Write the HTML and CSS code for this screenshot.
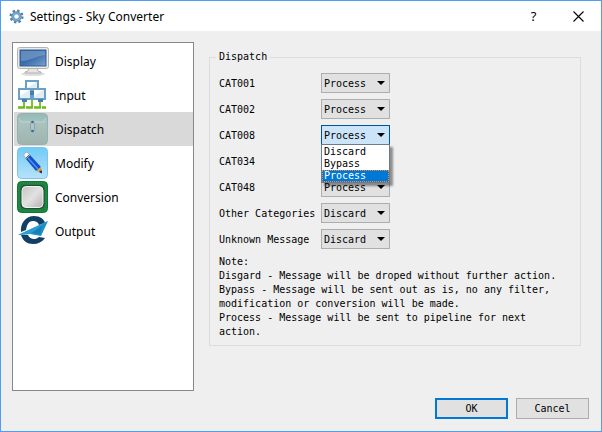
FILE: index.html
```html
<!DOCTYPE html>
<html lang="en">
<head>
    <meta charset="UTF-8">
    <meta name="viewport" content="width=device-width, initial-scale=1.0">
    <title>Settings - Sky Converter</title>
    <link rel="stylesheet" href="styles.css">
</head>
<body>

<div class="window">
    <header class="titlebar">
        <svg class="app-icon" viewBox="0 0 16 16">
            <circle cx="8" cy="8" r="6" fill="none" stroke="#4f83ac" stroke-width="3" stroke-dasharray="2.4 2.31"/>
            <circle cx="8" cy="8" r="4" fill="#fff" stroke="#5f92ba" stroke-width="3"/>
            <circle cx="8" cy="8" r="4" fill="none" stroke="#8db4d2" stroke-width="1"/>
        </svg>
        <h1>Settings - Sky Converter</h1>
        <button type="button" class="caption-btn" aria-label="Help">?</button>
        <button type="button" class="caption-btn" aria-label="Close">
            <svg width="11" height="11" viewBox="0 0 11 11">
                <path d="M.5 .5l10 10M10.5 .5l-10 10" stroke="#000" stroke-width="1.1"/>
            </svg>
        </button>
    </header>

    <main class="content">
        <nav class="pages">
            <a href="#display">
                <svg viewBox="0 0 32 32">
                    <defs>
                        <linearGradient id="screen" x1="0" y1="0" x2="1" y2="1">
                            <stop offset="0" stop-color="#3466a5"/>
                            <stop offset=".5" stop-color="#3b6fac"/>
                            <stop offset="1" stop-color="#7ba3cf"/>
                        </linearGradient>
                    </defs>
                    <ellipse cx="16" cy="29" rx="12" ry="2" fill="#dededc"/>
                    <path d="M12 23h8l1 3 3 1v1H8v-1l3-1z" fill="#e6e6e2" stroke="#a5a6a2" stroke-width=".8"/>
                    <rect x=".5" y="2.5" width="31" height="21" rx="2" fill="#ecece8" stroke="#b4b4af"/>
                    <rect x="3" y="5" width="26" height="16" fill="url(#screen)" stroke="#2f5e9a"/>
                    <path d="M4 6h24v4C19 11 13 16 4 16z" fill="#fff" opacity=".22"/>
                </svg>
                Display
            </a>
            <a href="#input">
                <svg viewBox="0 0 32 32">
                    <path d="M7 23v5M15 20v8M23 23v5" stroke="#7cc42c" stroke-width="2"/>
                    <path d="M1 28.500h28" stroke="#6cba16" stroke-width="2.500" stroke-dasharray="7 1"/>
                    <g fill="#e2eef6" stroke="#6ba0c6" stroke-width="2">
                        <rect x="9" y="2" width="12" height="10"/>
                        <rect x="2" y="10" width="12" height="10"/>
                        <rect x="16" y="10" width="12" height="10"/>
                    </g>
                    <path d="M5 20h5v3H5zM21 20h5v3h-5zM13 12h4v4h-4z" fill="#4680aa"/>
                    <path d="M3 11h9l-9 6zM17 11h9l-9 6zM10 3h9l-9 6z" fill="#fff"/>
                </svg>
                Input
            </a>
            <a href="#dispatch" class="selected">
                <svg viewBox="0 0 32 32">
                    <defs>
                        <linearGradient id="folder" x1="0" y1="0" x2="0" y2="1">
                            <stop offset="0" stop-color="#93b9b6"/>
                            <stop offset=".3" stop-color="#a9c3bf"/>
                            <stop offset="1" stop-color="#9fb3ac"/>
                        </linearGradient>
                    </defs>
                    <rect x=".5" y=".5" width="30" height="31" rx="4" fill="url(#folder)" stroke="#94b2ae"/>
                    <path d="M2 5l2 4h23l2-4" fill="none" stroke="#bfd4d0"/>
                    <rect x="13.500" y="9" width="4" height="9" rx="1.500" fill="#b4c4c9" stroke="#8199a2" stroke-width=".8"/>
                    <circle cx="15.500" cy="9" r="1.300" fill="#2670a8"/>
                    <circle cx="15.500" cy="18" r="1.300" fill="#2670a8"/>
                </svg>
                Dispatch
            </a>
            <a href="#modify">
                <svg viewBox="0 0 32 32">
                    <defs>
                        <linearGradient id="sky" x1="0" y1="0" x2="0" y2="1">
                            <stop offset="0" stop-color="#6dccf7"/>
                            <stop offset=".4" stop-color="#8ed4f8"/>
                            <stop offset="1" stop-color="#b6e3fb"/>
                        </linearGradient>
                    </defs>
                    <rect x=".5" y=".5" width="30" height="31" rx="4" fill="url(#sky)" stroke="#7cc4e8"/>
                    <path d="M9 12l4-4 11 12-5 4z" fill="#1450c8"/>
                    <path d="M11 11l10 11" stroke="#4c96f5" stroke-width="1.500"/>
                    <path d="M7 9q-1-3 3-4l3 3-4 4z" fill="#f7f7f7" stroke="#8a95a0" stroke-width=".6"/>
                    <path d="M8.500 11.500l4-4" stroke="#5d6976" stroke-width="1"/>
                    <path d="M19 24l5-4 1 6z" fill="#dd9c4d"/>
                    <path d="M22 25l2.500-2 .5 3.500z" fill="#222"/>
                </svg>
                Modify
            </a>
            <a href="#conversion">
                <svg viewBox="0 0 32 32">
                    <defs>
                        <linearGradient id="chip" x1="0" y1="0" x2="1" y2="1">
                            <stop offset="0" stop-color="#c4c4c4"/>
                            <stop offset=".5" stop-color="#e2e2e2"/>
                            <stop offset="1" stop-color="#b2b2b2"/>
                        </linearGradient>
                    </defs>
                    <rect x=".5" y=".5" width="30" height="31" rx="4" fill="#16823b" stroke="#0d7a33"/>
                    <rect x="2" y="2" width="27" height="28" rx="4" fill="none" stroke="#349a53" stroke-dasharray="1 1"/>
                    <rect x="3.500" y="4" width="24" height="24" rx="5" fill="#31443a"/>
                    <rect x="5" y="5.500" width="21" height="21" rx="4" fill="url(#chip)" stroke="#f2f2f2"/>
                </svg>
                Conversion
            </a>
            <a href="#output">
                <svg viewBox="0 0 32 32">
                    <path d="M4 17C3 8 9 1 17 1c6 0 10 3 11 7l-6 2c-1-3-3-4-6-4-4 0-6 3-7 9z" fill="#123f66"/>
                    <path d="M4 20c2 6 6 9 12 9 5 0 9-2 12-6l-6-1c-3 3-9 3-11-2z" fill="#123f66"/>
                    <path d="M31 6L1 20l12-1 11 2z" fill="#1f8fc6"/>
                    <path d="M31 6L13 19l-12 1z" fill="#2c9dd1"/>
                    <path d="M25 11L15 18l8 1z" fill="#1680b8"/>
                </svg>
                Output
            </a>
        </nav>

        <form class="settings" id="settingsForm">
            <fieldset>
                <legend>Dispatch</legend>

                <div class="row">
                    <label for="cat001">CAT001</label>
                    <div class="combo">
                        <select id="cat001"><option>Discard</option><option>Bypass</option><option selected>Process</option></select>
                    </div>
                </div>
                <div class="row">
                    <label for="cat002">CAT002</label>
                    <div class="combo">
                        <select id="cat002"><option>Discard</option><option>Bypass</option><option selected>Process</option></select>
                    </div>
                </div>
                <div class="row">
                    <label for="cat008">CAT008</label>
                    <div class="combo open">
                        <select id="cat008"><option>Discard</option><option>Bypass</option><option selected>Process</option></select>
                        <ul class="dropdown">
                            <li>Discard</li>
                            <li>Bypass</li>
                            <li class="active">Process</li>
                        </ul>
                    </div>
                </div>
                <div class="row">
                    <label for="cat034">CAT034</label>
                    <div class="combo">
                        <select id="cat034"><option>Discard</option><option>Bypass</option><option selected>Process</option></select>
                    </div>
                </div>
                <div class="row">
                    <label for="cat048">CAT048</label>
                    <div class="combo">
                        <select id="cat048"><option>Discard</option><option>Bypass</option><option selected>Process</option></select>
                    </div>
                </div>
                <div class="row">
                    <label for="other">Other Categories</label>
                    <div class="combo">
                        <select id="other"><option selected>Discard</option><option>Bypass</option><option>Process</option></select>
                    </div>
                </div>
                <div class="row">
                    <label for="unknown">Unknown Message</label>
                    <div class="combo">
                        <select id="unknown"><option selected>Discard</option><option>Bypass</option><option>Process</option></select>
                    </div>
                </div>

                <div class="note">
                    <p>Note:</p>
                    <p>Disgard - Message will be droped without further action.</p>
                    <p>Bypass - Message will be sent out as is, no any filter, modification or conversion will be made.</p>
                    <p>Process - Message will be sent to pipeline for next action.</p>
                </div>
            </fieldset>
        </form>
    </main>

    <footer class="actions">
        <button type="submit" form="settingsForm" class="btn default">OK</button>
        <button type="button" class="btn">Cancel</button>
    </footer>
</div>

</body>
</html>
```
FILE: styles.css
```css
* {
    box-sizing: border-box;
}

body {
    margin: 0;
    font-family: "DejaVu Sans Mono", monospace;
    font-size: 10px;
    color: #000;
}

.window {
    display: flex;
    flex-direction: column;
    min-height: 100vh;
    border: 1px solid #4f9ff0;
    background-color: #efefef;
}

/* Title bar */
.titlebar {
    display: flex;
    align-items: center;
    height: 30px;
    padding-left: 8px;
    background-color: #fff;
}

.app-icon {
    width: 15px;
    height: 15px;
}

.titlebar h1 {
    flex: 1;
    margin: 0 0 0 6px;
    font-family: "Noto Sans", sans-serif;
    font-size: 12px;
    font-weight: normal;
}

.caption-btn {
    display: flex;
    align-items: center;
    justify-content: center;
    width: 45px;
    height: 30px;
    padding: 0;
    border: none;
    background: none;
    font-family: "Noto Sans", sans-serif;
    font-size: 13px;
    color: #000;
}

/* Body */
.content {
    flex: 1;
    display: flex;
    gap: 15px;
    padding: 11px 20px 0 11px;
}

.pages {
    width: 182px;
    padding: 1px 0 1px 1px;
    border: 1px solid #828790;
    background-color: #fff;
}

.pages a {
    display: flex;
    align-items: center;
    gap: 6px;
    height: 34px;
    padding-left: 3px;
    font-family: "Noto Sans", sans-serif;
    font-size: 12px;
    color: #000;
    text-decoration: none;
}

.pages a.selected {
    background-color: #d9d9d9;
}

.pages svg {
    width: 32px;
    height: 32px;
}

.settings {
    flex: 1;
    padding-top: 9px;
}

fieldset {
    margin: 0;
    padding: 10px 9px 6px;
    border: 1px solid #dcdcdc;
}

legend {
    margin-left: -3px;
    padding: 0 3px;
    line-height: 12px;
}

.row {
    display: flex;
    align-items: center;
    height: 20px;
    margin-bottom: 6px;
}

.row label {
    width: 102px;
}

.combo {
    position: relative;
    width: 69px;
}

.combo::after {
    content: "";
    position: absolute;
    top: 8px;
    right: 5px;
    border: 4px solid transparent;
    border-top: 4px solid #000;
    border-bottom: none;
    pointer-events: none;
}

select {
    appearance: none;
    display: block;
    width: 100%;
    height: 20px;
    padding: 0 0 0 2px;
    border: 1px solid #adadad;
    border-radius: 0;
    background-color: #e1e1e1;
    font: inherit;
    color: #000;
}

.open select {
    border-color: #005499;
    background-color: #cce4f7;
}

.dropdown {
    position: absolute;
    z-index: 1;
    top: 19px;
    left: 0;
    width: 100%;
    margin: 0;
    padding: 1px 0 0;
    border: 1px solid #6e7b87;
    background-color: #fff;
    box-shadow: 3px 3px 2px rgba(0, 0, 0, 0.4);
    list-style: none;
}

.dropdown li {
    padding-left: 2px;
    line-height: 12px;
}

.dropdown .active {
    background-color: #0078d7;
    outline: 1px dotted #ff8728;
    outline-offset: -1px;
    color: #fff;
}

.note p {
    margin: 0;
    line-height: 14px;
}

/* Bottom buttons */
.actions {
    display: flex;
    justify-content: flex-end;
    gap: 8px;
    padding: 7px 12px 12px;
}

.btn {
    width: 73px;
    height: 21px;
    padding: 0;
    border: 1px solid #adadad;
    background-color: #e1e1e1;
    font: inherit;
    color: #000;
}

.btn.default {
    border: 2px solid #0078d7;
}
```
